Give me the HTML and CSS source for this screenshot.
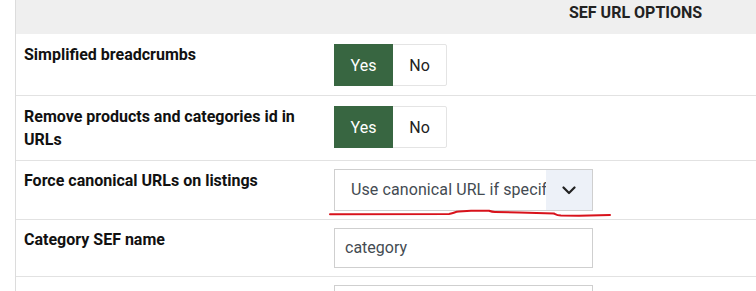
FILE: index.html
```html
<!DOCTYPE html>
<html>
<head>
<meta charset="utf-8">
<link rel="stylesheet" href="styles.css">
</head>
<body>
<div class="page">
  <div class="panel">
    <div class="panel-head"><span class="panel-title">SEF URL OPTIONS</span></div>
    <div class="row">
      <div class="label">Simplified breadcrumbs</div>
      <div class="control">
        <div class="toggle"><span class="opt on">Yes</span><span class="opt">No</span></div>
      </div>
    </div>
    <div class="row">
      <div class="label">Remove products and categories id in URLs</div>
      <div class="control">
        <div class="toggle"><span class="opt on">Yes</span><span class="opt">No</span></div>
      </div>
    </div>
    <div class="row row-tight">
      <div class="label">Force canonical URLs on listings</div>
      <div class="control">
        <div class="select">
          <span class="select-text">Use canonical URL if specified</span>
          <span class="select-arrow">
            <svg width="14" height="9" viewBox="0 0 14 9"><path d="M1.5 1.5 L7 7 L12.5 1.5" fill="none" stroke="#222" stroke-width="2.2" stroke-linecap="round" stroke-linejoin="round"/></svg>
          </span>
        </div>
      </div>
    </div>
    <div class="row row-tight">
      <div class="label">Category SEF name</div>
      <div class="control">
        <div class="input">category</div>
      </div>
    </div>
    <div class="row row-tight">
      <div class="label">&nbsp;</div>
      <div class="control">
        <div class="input"></div>
      </div>
    </div>
  </div>
  <svg class="annotation" width="282" height="14" viewBox="0 0 282 14">
    <path d="M1 7.3 L120 7 C124 6.6 126 4.8 130 4.6 L142 3.8 L160 3.8 C162 4.6 163 5 166 5 L190 5.5 L225 6.5 C227 7.6 228 8.4 232 8.6 L250 8.7 L281 8" fill="none" stroke="#d8121b" stroke-width="2" stroke-linecap="round" stroke-linejoin="round"/>
  </svg>
</div>
</body>
</html>
```

FILE: styles.css
```css
* { box-sizing: border-box; }
html, body {
  margin: 0;
  padding: 0;
  background: #ffffff;
}
body {
  font-family: Roboto, "Liberation Sans", Arial, sans-serif;
  color: #111;
  overflow: hidden;
  width: 756px;
  height: 291px;
}
.page {
  position: relative;
  height: 291px;
  overflow: hidden;
  padding-left: 15px;
}
.panel {
  border-left: 1px solid #dcdcdc;
  height: 100%;
}
.panel-head {
  height: 34px;
  background: #efefef;
  padding: 4px 0 0 553px;
  line-height: 18px;
}
.panel-title {
  font-size: 16px;
  font-weight: 700;
  color: #222;
}
.row {
  display: grid;
  grid-template-columns: 318px 1fr;
  padding: 10px 0 9px;
  border-bottom: 1px solid #e2e2e2;
}
.row-tight {
  padding: 8px 0 8px;
}
.label {
  padding: 0 16px 0 8px;
  font-size: 16px;
  font-weight: 700;
  line-height: 22.5px;
  color: #111;
}
.row-tight .label {
  padding-top: 1px;
}
.control {
  display: flex;
  align-items: flex-start;
}
.toggle {
  display: inline-flex;
  height: 42px;
  border: 1px solid #e4e4e4;
  border-radius: 2px;
  background: #fff;
}
.opt {
  display: flex;
  align-items: center;
  justify-content: center;
  font-size: 16px;
  color: #222;
}
.opt:first-child { width: 59px; margin: -1px 0 -1px -1px; }
.opt:last-child { width: 53px; }
.opt.on {
  background: #386641;
  color: #ffffff;
}
.select {
  display: flex;
  width: 259px;
  height: 42px;
  border: 1px solid #cfcfcf;
  background: #fff;
}
.select-text {
  flex: 1;
  overflow: hidden;
  white-space: nowrap;
  padding-left: 16px;
  font-size: 16px;
  letter-spacing: 0.1px;
  line-height: 40px;
  color: #444b52;
}
.select-arrow {
  width: 46px;
  background: #edf1f8;
  display: flex;
  align-items: center;
  justify-content: center;
}
.input {
  width: 259px;
  height: 40px;
  border: 1px solid #cfcfcf;
  padding: 0 10px;
  font-size: 16px;
  line-height: 38px;
  color: #444b52;
}
.annotation {
  position: absolute;
  left: 329px;
  top: 207px;
}
```
